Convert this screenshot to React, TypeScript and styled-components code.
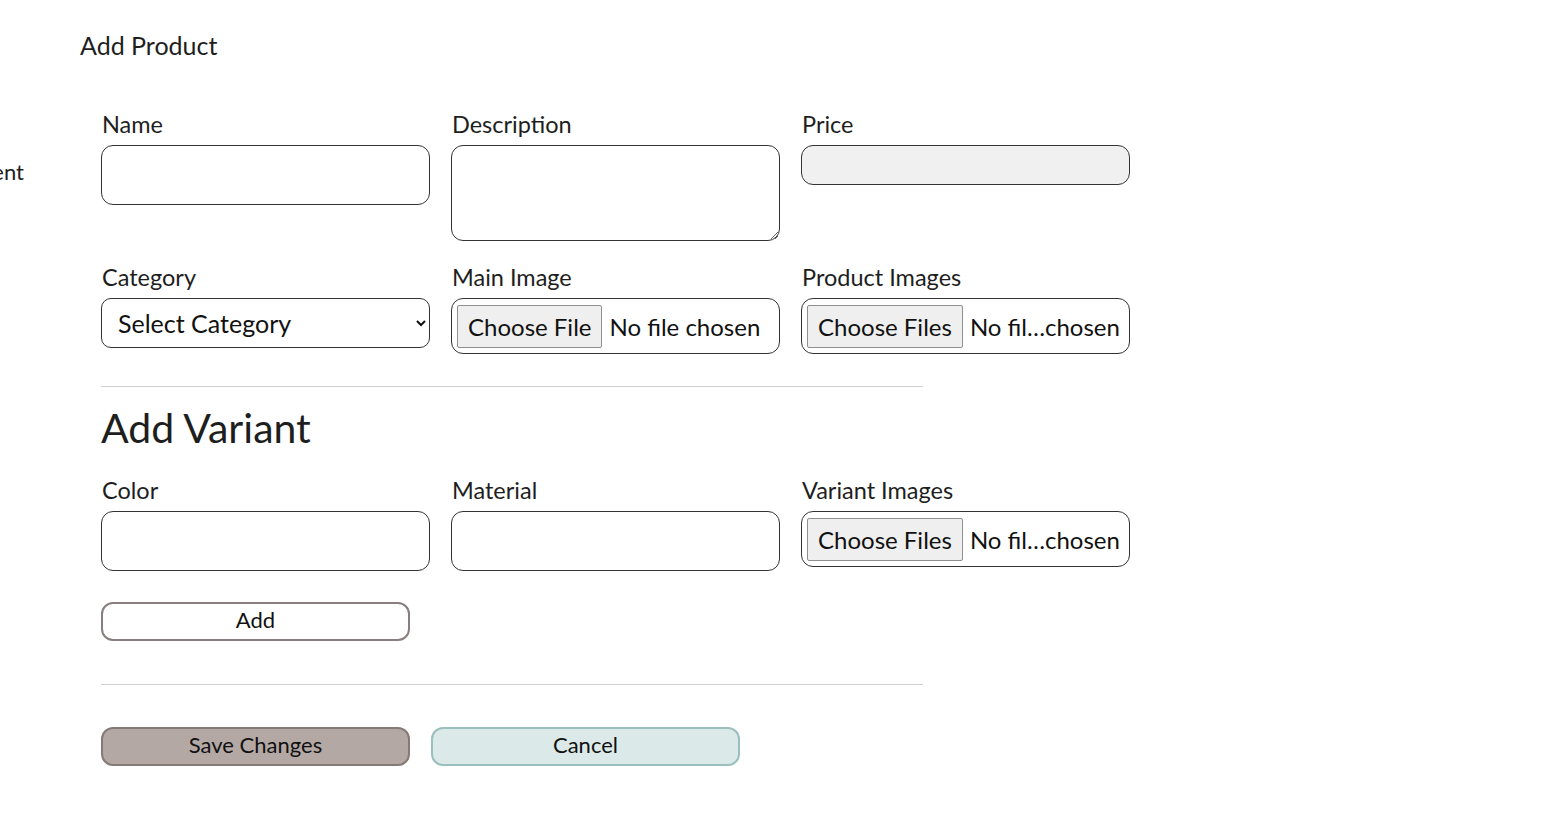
import React from "react";
import styled, { createGlobalStyle } from "styled-components";

const Global = createGlobalStyle`
  html, body { margin: 0; padding: 0; background: #fff; }
  body { font-family: "Lato", "Open Sans", sans-serif; color: #1e1e1e; }
  * { box-sizing: border-box; }
`;

const Page = styled.div`
  display: flex;
  min-height: 836px;
`;

const Sidebar = styled.nav`
  width: 80px;
  flex: none;
  padding-top: 158px;
`;

const NavItem = styled.div`
  width: 24px;
  display: flex;
  justify-content: flex-end;
  overflow: hidden;
  white-space: nowrap;
  font-size: 22px;
`;

const Main = styled.main`
  flex: 1;
  padding-top: 30px;
`;

const Title = styled.h1`
  margin: 0 0 52px;
  font-size: 25px;
  font-weight: 400;
  line-height: 30px;
`;

const Form = styled.form`
  padding-left: 21px;
  width: 844px;
`;

const Grid = styled.div`
  display: grid;
  grid-template-columns: repeat(3, 329px);
  column-gap: 21px;
  row-gap: 24px;
  align-items: start;
`;

const Field = styled.div`
  display: flex;
  flex-direction: column;
  gap: 9px;
`;

const Label = styled.label`
  font-size: 23.5px;
  line-height: 24px;
  padding-left: 1px;
`;

const TextInput = styled.input<{ $h?: number; $disabled?: boolean }>`
  height: ${(p) => p.$h ?? 60}px;
  border: 1px solid #333;
  border-radius: 12px;
  background: ${(p) => (p.$disabled ? "#f0f0f0" : "#fff")};
  font: inherit;
  font-size: 20px;
  padding: 0 12px;
`;

const TextArea = styled.textarea`
  height: 96px;
  border: 1px solid #333;
  border-radius: 12px;
  font: inherit;
  font-size: 20px;
  padding: 8px 12px;
`;

const Select = styled.select`
  height: 50px;
  border: 1px solid #333;
  border-radius: 10px;
  background: #fff;
  font-family: "Lato", sans-serif;
  font-size: 25px;
  color: #111;
  padding: 0 10px 0 12px;
`;

const FileBox = styled.input`
  height: 56px;
  border: 1px solid #333;
  border-radius: 12px;
  padding: 6px 9px 6px 5px;
  font-family: "Lato", sans-serif;
  font-size: 24px;
  color: #111;
  &::file-selector-button {
    font-family: "Lato", sans-serif;
    font-size: 24px;
    height: 43px;
    padding: 0 10px;
    margin-right: 7px;
    background: #efefef;
    border: 1px solid #8f8f8f;
    border-radius: 2px;
    color: #111;
  }
`;

const Divider = styled.hr`
  border: none;
  border-top: 1px solid #cfcfcf;
  margin: 0;
  width: 822px;
`;

const TopDivider = styled(Divider)`
  margin-top: 32px;
`;

const SubTitle = styled.h2`
  margin: 17px 0 26px;
  font-size: 41px;
  font-weight: 400;
  line-height: 48px;
`;

const Button = styled.button<{ $variant?: "outline" | "save" | "cancel" }>`
  width: 309px;
  height: 39px;
  border-radius: 12px;
  border: 2px solid
    ${(p) =>
      p.$variant === "save" ? "#867a77" : p.$variant === "cancel" ? "#9bbfbe" : "#877f7e"};
  background: ${(p) =>
    p.$variant === "save" ? "#b4a8a4" : p.$variant === "cancel" ? "#dce9e9" : "#fff"};
  font-family: "Lato", sans-serif;
  font-size: 22px;
  line-height: 1;
  color: #111;
  padding: 0 0 3px;
`;

const AddButton = styled(Button)`
  margin: 31px 0 43px;
`;

const Actions = styled.div`
  display: flex;
  gap: 21px;
  margin-top: 42px;
`;

export default function App() {
  return (
    <>
      <Global />
      <Page>
        <Sidebar>
          <NavItem>Management</NavItem>
        </Sidebar>
        <Main>
          <Title>Add Product</Title>
          <Form onSubmit={(e) => e.preventDefault()}>
            <Grid>
              <Field>
                <Label>Name</Label>
                <TextInput type="text" />
              </Field>
              <Field>
                <Label>Description</Label>
                <TextArea />
              </Field>
              <Field>
                <Label>Price</Label>
                <TextInput type="text" $h={40} $disabled disabled />
              </Field>
              <Field>
                <Label>Category</Label>
                <Select defaultValue="">
                  <option value="">Select Category</option>
                </Select>
              </Field>
              <Field>
                <Label>Main Image</Label>
                <FileBox type="file" />
              </Field>
              <Field>
                <Label>Product Images</Label>
                <FileBox type="file" multiple />
              </Field>
            </Grid>
            <TopDivider />
            <SubTitle>Add Variant</SubTitle>
            <Grid>
              <Field>
                <Label>Color</Label>
                <TextInput type="text" />
              </Field>
              <Field>
                <Label>Material</Label>
                <TextInput type="text" />
              </Field>
              <Field>
                <Label>Variant Images</Label>
                <FileBox type="file" multiple />
              </Field>
            </Grid>
            <AddButton type="button">Add</AddButton>
            <Divider />
            <Actions>
              <Button type="submit" $variant="save">Save Changes</Button>
              <Button type="button" $variant="cancel">Cancel</Button>
            </Actions>
          </Form>
        </Main>
      </Page>
    </>
  );
}
